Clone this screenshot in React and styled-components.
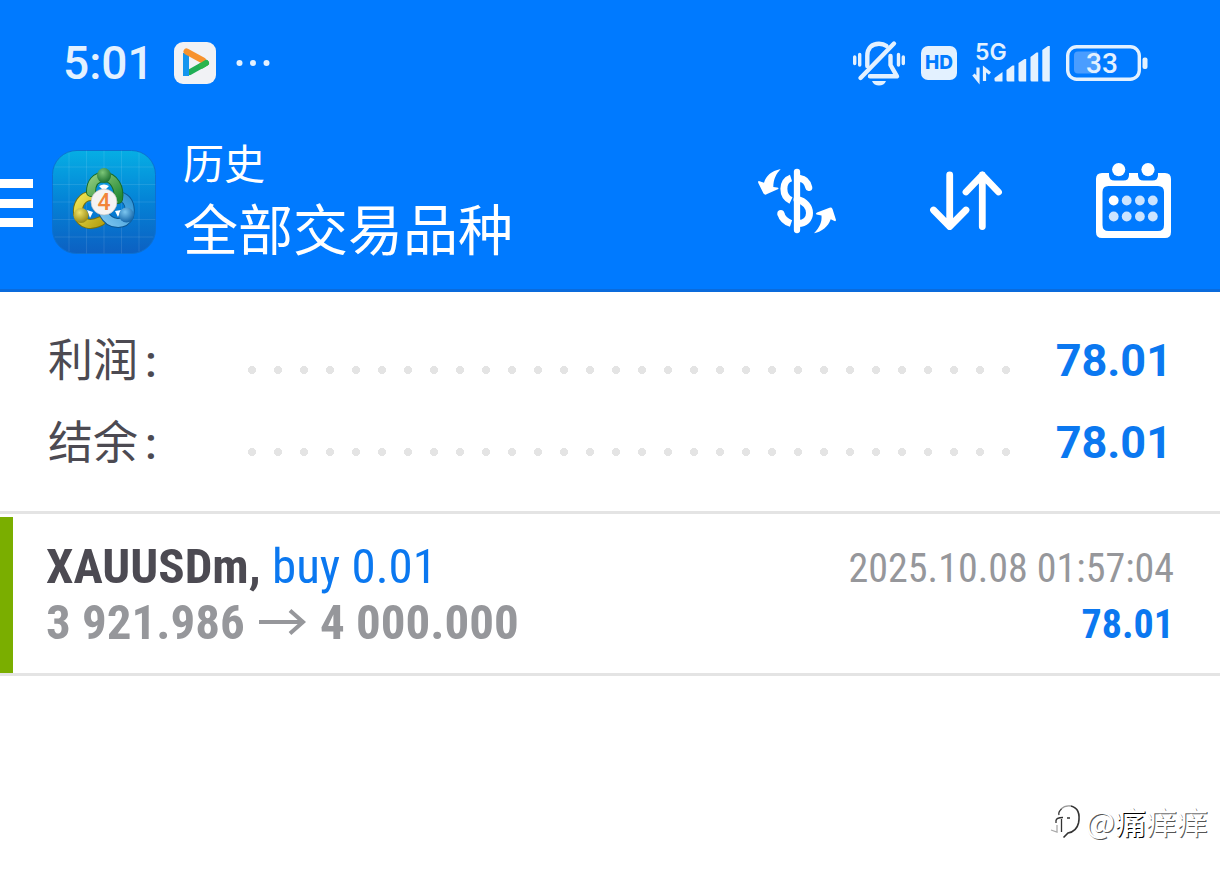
import React from 'react';
import styled, { createGlobalStyle } from 'styled-components';

const GlobalStyle = createGlobalStyle`
* {
    box-sizing: border-box;
}

body {
    margin: 0;
    background: #fff;
    font-family: Roboto, "Noto Sans CJK SC", sans-serif;
}

button {
    border: 0;
    padding: 0;
    background: none;
    cursor: pointer;
}

svg {
    display: block;
    flex: none;
    overflow: visible;
}
`

const Page = styled.div`
min-height: 100vh;
display: flex;
flex-direction: column;
`

const Header = styled.header`
background: #007aff;
border-bottom: 3px solid #0a6bdc;
color: #fff;
`

const StatusBar = styled.div`
height: 126px;
display: flex;
align-items: center;
justify-content: space-between;
padding: 0 72px 0 63px;
color: #e3f1ff;
`

const StatusGroup = styled.div`
display: flex;
align-items: center;
gap: ${({gap}) => gap}px;
`

const Clock = styled.time`
font: 500 46px/56px Roboto, sans-serif;
`

const HdBadge = styled.span`
width: 36px;
height: 34px;
border-radius: 7px;
background: #e3f1ff;
color: #007aff;
font: 800 19px/34px Inter, sans-serif;
text-align: center;
`

const AppBar = styled.div`
height: 163px;
display: flex;
align-items: center;
padding: 0 49px 12px 0;
`

const MenuButton = styled.button`
width: 33px;
height: 48px;
display: flex;
flex-direction: column;
justify-content: space-between;
margin: 3px 19px 0 0;

span {
    width: 100%;
    height: 9px;
    background: #fff;
}
`

const Titles = styled.div`
flex: 1;
margin-left: 27px;
padding-top: 5px;
`

const Section = styled.p`
margin: 0;
font-size: 41px;
line-height: 54px;
`

const Title = styled.h1`
margin: 0;
font-size: 55px;
font-weight: 400;
line-height: 78px;
`

const Actions = styled.nav`
display: flex;
align-items: center;
gap: 94px;
padding-bottom: 2px;
`

const Summary = styled.dl`
margin: 0;
padding: 27px 48px 28px;
border-bottom: 3px solid #e4e4e4;
`

const SummaryRow = styled.div`
height: 82px;
display: flex;
align-items: center;
`

const Label = styled.dt`
width: 191px;
display: flex;
gap: 7px;
padding-top: 3px;
color: #4c4a52;
font-size: 45px;
line-height: 60px;

span {
    font-weight: 500;
}
`

const Leader = styled.span`
flex: 1;
height: 26px;
margin-top: 20px;
background: radial-gradient(circle, #e4e4e4 3px, #e4e4e4 4px, transparent 4px) 0 0 / 26px 26px repeat-x;
`

const Amount = styled.dd`
width: 153px;
margin: 0;
padding-top: 2px;
color: #0b78f0;
font-size: 45px;
font-weight: 700;
line-height: 60px;
text-align: right;
`

const Deals = styled.ul`
list-style: none;
margin: 0;
padding: 3px 0 0;
`

const Deal = styled.li`
display: flex;
justify-content: space-between;
padding: 22px 46px 20px 33px;
border-left: 13px solid #7aae00;
font-family: "Roboto Condensed", "Liberation Sans Narrow", Roboto, sans-serif;
line-height: 56px;
`

const Divider = styled.hr`
margin: 0;
border: 0;
height: 3px;
background: #e4e4e4;
`

const Symbol = styled.div`
color: #4c4a52;
font-size: 49px;
font-weight: 700;
`

const Side = styled.span`
color: #0b78f0;
font-weight: 400;
`

const Prices = styled.div`
display: flex;
align-items: center;
gap: 14px;
color: #96979b;
font-size: 49px;
font-weight: 700;
`

const Results = styled.div`
padding-top: 2px;
`

const Result = styled.div`
text-align: right;
font-size: 40px;
color: ${({$profit}) => $profit ? '#0b78f0' : '#96979b'};
font-weight: ${({$profit}) => $profit ? 700 : 400};
`

const Watermark = styled.footer`
margin-top: auto;
padding: 0 12px 34px 0;
display: flex;
align-items: center;
justify-content: flex-end;
gap: 5px;
color: #fff;
font: 400 31px/40px "Noto Sans CJK SC", sans-serif;
text-shadow: 1px 1px 0 #555;

b {
    font-weight: 500;
    text-shadow: 1px 1px 0 #000;
}
`

const PlayerIcon = () => (
    <svg width="42" height="42" viewBox="0 0 42 42" fill="none" strokeWidth="6" strokeLinecap="round">
        <rect width="42" height="42" rx="9" fill="#f1f2f5" />
        <path d="M16 30 L32 21" stroke="#20ae55" />
        <path d="M12 11 V34" stroke="#1495ef" strokeLinecap="butt" />
        <path d="M12.500 9.500 L29 18.500" stroke="#f7922c" />
        <path d="M32 21 L28 23.500" stroke="#2bb44c" />
    </svg>
)

const MoreDots = () => (
    <svg width="34" height="8" viewBox="0 0 34 8" fill="currentColor">
        <circle cx="3.500" cy="4" r="3" />
        <circle cx="17" cy="4" r="3" />
        <circle cx="30.500" cy="4" r="3" />
    </svg>
)

const MutedBell = () => (
    <svg width="52" height="46" viewBox="0 0 52 46" fill="none" stroke="currentColor" strokeWidth="4.400" strokeLinecap="round" strokeLinejoin="round">
        <path d="M14.300 26 V16 C14.300 8 19 3.800 26 3.800 C29 3.800 31.500 4.500 33.500 6" />
        <path d="M7.500 38 L41 3.500" />
        <path d="M37.500 16 V25 L44 36.300 H17" />
        <path d="M6.700 14.500 V25 M45.500 14.500 V25" strokeWidth="3.400" />
        <path d="M1.700 17 V23.500 M50.300 17 V23.500" strokeWidth="3.400" />
        <path d="M19 41 H33 C31 47 21 47 19 41 Z" fill="currentColor" stroke="none" />
    </svg>
)

const Signal = () => (
    <svg width="77" height="46" viewBox="0 0 77 46" fill="currentColor">
        <text x="2" y="20" fontFamily="Inter" fontSize="23" fontWeight="600">5G</text>
        <path d="M5 27.500 V40 L0.500 34.500 M11.500 41 V29 L17 33.500" fill="none" stroke="currentColor" strokeWidth="3.200" />
        <path d="M21.500 38 L29.500 32 V41.500 H23 Q21.500 41.500 21.500 40 Z" />
        <path d="M33.500 30 L39.500 25.500 H41.300 V41.500 H35 Q33.500 41.500 33.500 40 Z" />
        <path d="M45.500 23 L51.500 19 H53.200 V41.500 H47 Q45.500 41.500 45.500 40 Z" />
        <path d="M57.500 17 L63.500 12.500 H65.200 V41.500 H59 Q57.500 41.500 57.500 40 Z" />
        <path d="M69.300 10 L75 6 H76.800 V41.500 H71 Q69.300 41.500 69.300 40 Z" />
    </svg>
)

const Battery = () => (
    <svg width="82" height="36" viewBox="0 0 82 36">
        <rect x="1.700" y="1.700" width="71.600" height="32.600" rx="9" fill="none" stroke="currentColor" strokeWidth="3.400" />
        <path d="M12 6.500 H31 V28.500 H12 Q8 28.500 8 24.500 V10.500 Q8 6.500 12 6.500 Z" fill="#4a9dff" />
        <rect x="76.500" y="12.500" width="5" height="11.500" rx="2" fill="currentColor" />
        <text x="36" y="28" textAnchor="middle" fontFamily="Roboto" fontSize="28" fontWeight="500" fill="currentColor">33</text>
    </svg>
)

const Logo = () => (
    <svg width="104" height="104" viewBox="0 0 104 104" fill="none" strokeLinecap="round">
        <defs>
            <linearGradient id="sky" x1="0" y1="0" x2="0" y2="1">
                <stop offset="0" stopColor="#06aee4" />
                <stop offset="0.500" stopColor="#0482d6" />
                <stop offset="1" stopColor="#0c60c2" />
            </linearGradient>
            <linearGradient id="leaf" x1="0" y1="0" x2="1" y2="1">
                <stop offset="0" stopColor="#8fca7c" />
                <stop offset="1" stopColor="#238a35" />
            </linearGradient>
            <linearGradient id="gold" x1="0" y1="0" x2="1" y2="1">
                <stop offset="0" stopColor="#f0e352" />
                <stop offset="1" stopColor="#b9a414" />
            </linearGradient>
            <linearGradient id="water" x1="1" y1="0" x2="0" y2="1">
                <stop offset="0" stopColor="#2e93d4" />
                <stop offset="1" stopColor="#7cc4ee" />
            </linearGradient>
            <radialGradient id="leafHead" cx="0.400" cy="0.300" r="0.700">
                <stop offset="0" stopColor="#7cc678" />
                <stop offset="1" stopColor="#1b7030" />
            </radialGradient>
            <radialGradient id="goldHead" cx="0.400" cy="0.300" r="0.700">
                <stop offset="0" stopColor="#efe268" />
                <stop offset="1" stopColor="#9a8a14" />
            </radialGradient>
            <radialGradient id="waterHead" cx="0.400" cy="0.300" r="0.700">
                <stop offset="0" stopColor="#7cc6f0" />
                <stop offset="1" stopColor="#1465a8" />
            </radialGradient>
        </defs>
        <rect x="0.500" y="0.500" width="103" height="103" rx="24" fill="url(#sky)" stroke="#0d70d0" />
        <path d="M17 3 V101 M34.500 1 V103 M52 1 V103 M69.500 1 V103 M87 3 V101 M3 17 H101 M1 34.500 H103 M1 52 H103 M1 69.500 H103 M3 87 H101" stroke="#fff" strokeOpacity="0.100" />
        <path d="M39 46 C30 46 25 55 26 64 C29 75 39 76 49 71" stroke="#76700f" strokeWidth="10" />
        <path d="M39 46 C30 46 25 55 26 64 C29 75 39 76 49 71" stroke="url(#gold)" strokeWidth="8" />
        <path d="M70 47 C77 50 79 58 77 66 C72 76 58 75 52 64" stroke="#0c5793" strokeWidth="10" />
        <path d="M70 47 C77 50 79 58 77 66 C72 76 58 75 52 64" stroke="url(#water)" strokeWidth="8" />
        <path d="M39 42 C39 32 44 27 52 27 C62 27 68 38 66 49" stroke="#176b2b" strokeWidth="10" />
        <path d="M39 42 C39 32 44 27 52 27 C62 27 68 38 66 49" stroke="url(#leaf)" strokeWidth="8" />
        <path d="M47 36 Q52 33 57 36 L52 41 Z M35 60 L41 62 L38 68 Z M63 61 L69 60 L66 67 Z" fill="#fff" />
        <ellipse cx="52" cy="25.500" rx="7" ry="7.500" fill="url(#leafHead)" />
        <circle cx="29" cy="65.500" r="7.500" fill="url(#goldHead)" />
        <circle cx="74.500" cy="65" r="7.500" fill="url(#waterHead)" />
        <circle cx="52" cy="52" r="13" fill="#f4f3f3" stroke="#b9b9b9" strokeWidth="0.600" />
        <text x="52" y="60" textAnchor="middle" fontFamily="Roboto" fontSize="23" fontWeight="500" fill="#f2853a">4</text>
    </svg>
)

const CurrencyIcon = () => (
    <svg width="78" height="68" viewBox="0 0 78 68" fill="none" stroke="#fff" strokeWidth="7" strokeLinecap="round">
        <path d="M39 4.800 V63" strokeWidth="6.300" />
        <path d="M42 11.500 C46 12 49.500 15 50.800 20.500" />
        <path d="M33 11 C23.500 14 23.500 29 33 33.500" strokeLinecap="butt" />
        <path d="M39 32.500 C56 36 55 57 40 56.500" />
        <path d="M22.800 46.500 C24 51 27 54.500 33 56.500" strokeLinecap="butt" />
        <circle cx="22.800" cy="46.500" r="3.500" fill="#fff" stroke="none" />
        <path d="M22.700 2 C13 4 8 9 6 15.700 L0.800 14 C0 14 0 15 0.300 16 L5.500 26.500 Q7 28.500 9 27 L20.300 22 Q21 20.500 19 20.500 L15.300 20 C15.500 12 18 7 22.700 2 Z" fill="#fff" stroke="none" />
        <path d="M56 66.300 C62 60 64 55 63.500 48.500 L58.500 47.500 Q57 46.500 59 45.500 L71.500 40.800 Q73.500 40 74.500 42 L78 53 Q78 54.500 76.500 54 L72.700 52.300 C70 60 64 64.500 56 66.300 Z" fill="#fff" stroke="none" />
    </svg>
)

const SortIcon = () => (
    <svg width="72" height="60" viewBox="0 0 72 60" fill="none" stroke="#fff" strokeWidth="6.800" strokeLinecap="round" strokeLinejoin="round">
        <path d="M19.700 3.800 V55.500 M3.500 39 L19.700 55.500 L36 39" />
        <path d="M52.300 55.500 V4 M36 21 L52.300 4 L68.500 21" />
    </svg>
)

const CalendarIcon = () => (
    <svg width="75" height="76" viewBox="0 0 75 76" fill="#fff">
        <path fillRule="evenodd" d="M6 10 H13 V12 Q13 17.500 18.500 17.500 H27.500 Q33 17.500 33 12 V10 H42 V12 Q42 17.500 47.500 17.500 H56.500 Q62 17.500 62 12 V10 H69 Q75 10 75 16 V69 Q75 75 69 75 H6 Q0 75 0 69 V16 Q0 10 6 10 Z M12.500 23 Q6.500 23 6.500 29 V62 Q6.500 68 12.500 68 H62 Q68 68 68 62 V29 Q68 23 62 23 Z" />
        <circle cx="22.700" cy="6.600" r="6.600" />
        <circle cx="52" cy="6.600" r="6.600" />
        {[37.5, 53.5].map(cy => [17.7, 30.7, 43.9, 56.8].map(cx => (
            <circle key={cx + cy} cx={cx} cy={cy} r="4.900" fill={cx < 20 && cy < 40 ? '#fff' : '#cbe4ff'} />
        )))}
    </svg>
)

const Arrow = () => (
    <svg width="47" height="26" viewBox="0 0 47 26" fill="none" stroke="currentColor" strokeWidth="4">
        <path d="M0 12 H45 M31 0.500 L44 12 L31 23.500" />
    </svg>
)

const WatermarkIcon = () => (
    <svg width="30" height="36" viewBox="0 0 30 36" fill="none" stroke="#333" strokeWidth="1.300">
        <path d="M20 3 C28 5 29 12 27.500 20 C26 27 22 29 17 30 L12.500 34.500" strokeWidth="1.600" />
        <path d="M10 6 C13 3 17 2.500 20 3" stroke="#999" />
        <path d="M10.500 6 Q7 9 8 12 M5 18 C5 15.500 7 14.500 12 14.500 M5 17 V20 M10.500 16 V29 M16 15 H19" />
        <path d="M0 27 L6 29 V22" stroke="#aaa" />
    </svg>
)

const summary = [
    { label: '利润', value: '78.01' },
    { label: '结余', value: '78.01' },
]

const App = () => {
    return(
        <Page>
            <GlobalStyle />
            <Header>
                <StatusBar>
                    <StatusGroup gap={20}>
                        <Clock>5:01</Clock>
                        <PlayerIcon />
                        <MoreDots />
                    </StatusGroup>
                    <StatusGroup gap={16}>
                        <MutedBell />
                        <HdBadge>HD</HdBadge>
                        <Signal />
                        <Battery />
                    </StatusGroup>
                </StatusBar>
                <AppBar>
                    <MenuButton aria-label="菜单"><span /><span /><span /></MenuButton>
                    <Logo />
                    <Titles>
                        <Section>历史</Section>
                        <Title>全部交易品种</Title>
                    </Titles>
                    <Actions>
                        <button aria-label="货币"><CurrencyIcon /></button>
                        <button aria-label="排序"><SortIcon /></button>
                        <button aria-label="日期"><CalendarIcon /></button>
                    </Actions>
                </AppBar>
            </Header>
            <Summary>
                {summary.map(({label, value}) => (
                    <SummaryRow key={label}>
                        <Label>{label}<span>:</span></Label>
                        <Leader />
                        <Amount>{value}</Amount>
                    </SummaryRow>
                ))}
            </Summary>
            <Deals>
                <Deal>
                    <div>
                        <Symbol>XAUUSDm, <Side>buy 0.01</Side></Symbol>
                        <Prices>3 921.986 <Arrow /> 4 000.000</Prices>
                    </div>
                    <Results>
                        <Result>2025.10.08 01:57:04</Result>
                        <Result $profit>78.01</Result>
                    </Results>
                </Deal>
            </Deals>
            <Divider />
            <Watermark>
                <WatermarkIcon />
                <span>@<b>痛</b>痒痒</span>
            </Watermark>
        </Page>
    )
}

export default App;
